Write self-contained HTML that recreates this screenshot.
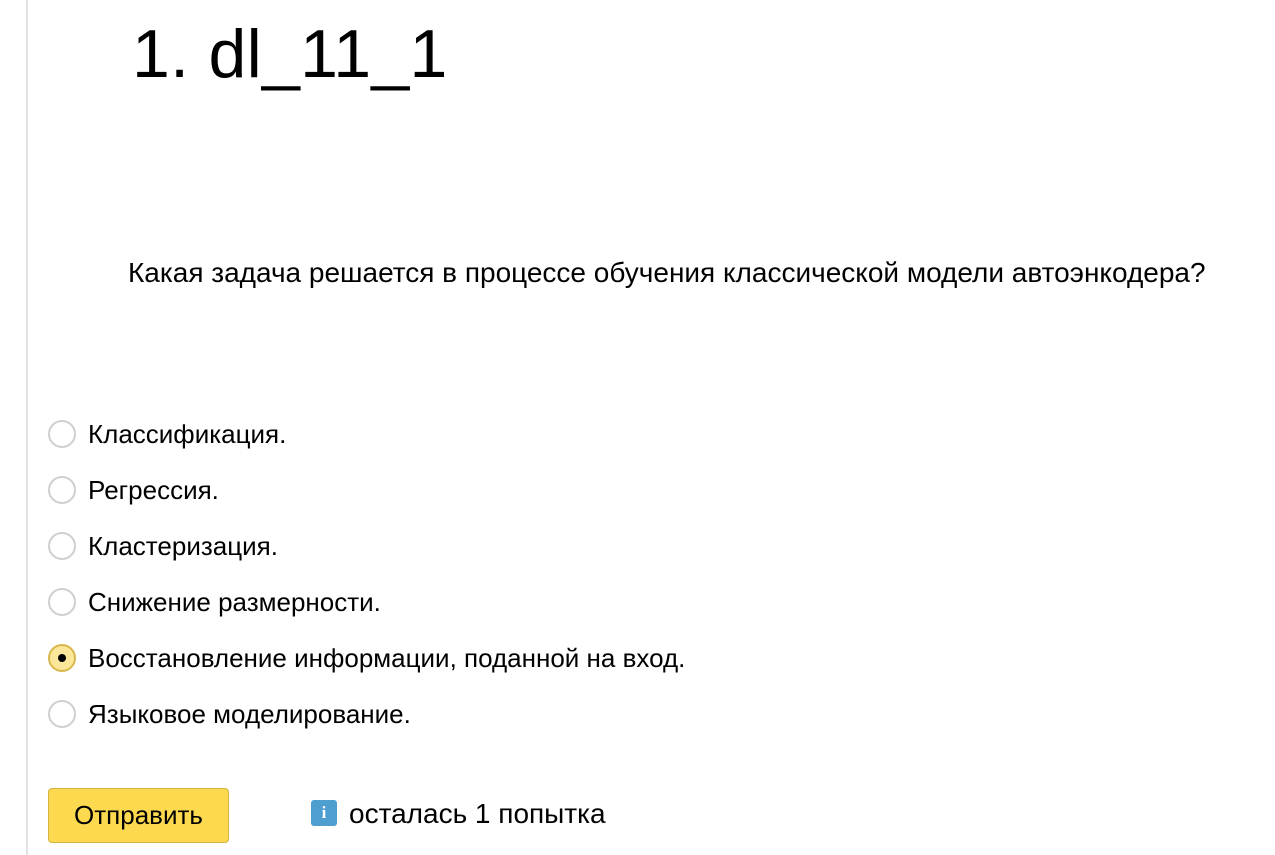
<!DOCTYPE html>
<html><head><meta charset="utf-8"><style>
body{margin:0;width:1275px;height:855px;background:#fff;font-family:"Liberation Sans",Arial,sans-serif;color:#000;position:relative;overflow:hidden}
.bar{position:absolute;left:26px;top:0;width:2px;height:855px;background:#e3e3e3}
.t{position:absolute;white-space:nowrap}
h1{position:absolute;left:132px;top:14px;margin:0;font-weight:normal;font-size:68px;line-height:80px;letter-spacing:0.3px}
.q{left:128px;top:256px;font-size:28px;line-height:34px}
.r{position:absolute;left:48px;border:2px solid #cfcfcf;border-radius:50%;box-sizing:border-box;width:28px;height:28px}
.r.on{background:#fbe69a;border-color:#d8b84e}
.r.on:after{content:"";position:absolute;left:8px;top:8px;width:8px;height:8px;border-radius:50%;background:#000}
.o{left:88px;font-size:26px;line-height:30px}
.btn{position:absolute;left:48px;top:788px;width:181px;height:55px;box-sizing:border-box;background:#fdd94f;border:1px solid #d3b340;border-radius:4px;font-size:26px;text-align:center;line-height:53px}
.i{position:absolute;left:311px;top:800px;width:26px;height:26px;background:#4e9fcf;border-radius:3px;color:#fff;font:bold 17px "Liberation Serif",serif;text-align:center;line-height:26px}
</style></head><body>
<div class="bar"></div>
<h1>1. dl_11_1</h1>
<div class="t q">Какая задача решается в процессе обучения классической модели автоэнкодера?</div>
<div class="r" style="top:420px"></div><div class="t o" style="top:419px">Классификация.</div>
<div class="r" style="top:476px"></div><div class="t o" style="top:475px">Регрессия.</div>
<div class="r" style="top:532px"></div><div class="t o" style="top:531px">Кластеризация.</div>
<div class="r" style="top:588px"></div><div class="t o" style="top:587px">Снижение размерности.</div>
<div class="r on" style="top:644px"></div><div class="t o" style="top:643px">Восстановление информации, поданной на вход.</div>
<div class="r" style="top:700px"></div><div class="t o" style="top:699px">Языковое моделирование.</div>
<div class="btn">Отправить</div>
<div class="i">i</div>
<div class="t" style="left:349px;top:797px;font-size:28px;line-height:34px">осталась 1 попытка</div>
</body></html>
